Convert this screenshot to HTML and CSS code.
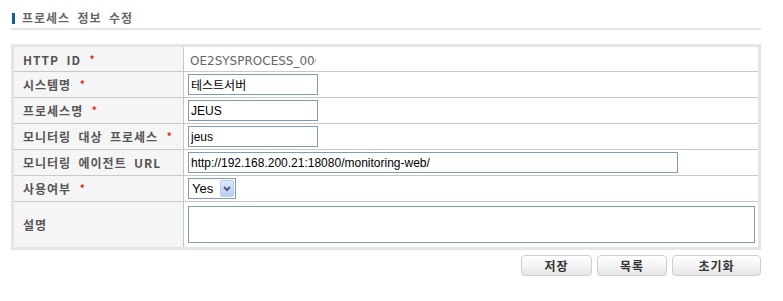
FILE: index.html
```html
<!DOCTYPE html>
<html lang="ko">
<head>
    <meta charset="UTF-8">
    <title>프로세스 정보 수정</title>
    <link rel="stylesheet" href="styles.css">
</head>
<body>
    <div class="content">
        <h3 class="section-title">프로세스 정보 수정</h3>
        <div class="form-box">
            <table class="form-table">
                <tr class="first">
                    <th>HTTP ID <span class="req">*</span></th>
                    <td><input type="text" class="readonly" value="OE2SYSPROCESS_0001" readonly></td>
                </tr>
                <tr>
                    <th>시스템명 <span class="req">*</span></th>
                    <td><input type="text" class="inp" value="테스트서버"></td>
                </tr>
                <tr>
                    <th>프로세스명 <span class="req">*</span></th>
                    <td><input type="text" class="inp" value="JEUS"></td>
                </tr>
                <tr>
                    <th>모니터링 대상 프로세스 <span class="req">*</span></th>
                    <td><input type="text" class="inp" value="jeus"></td>
                </tr>
                <tr>
                    <th>모니터링 에이전트 URL</th>
                    <td><input type="text" class="inp inp-long" value="http://192.168.200.21:18080/monitoring-web/"></td>
                </tr>
                <tr>
                    <th>사용여부 <span class="req">*</span></th>
                    <td>
                        <span class="select-wrap">
                            <select class="sel">
                                <option>Yes</option>
                                <option>No</option>
                            </select>
                            <span class="sel-arrow">
                                <svg width="8" height="6" viewBox="0 0 8 6"><path d="M1 1 L4 4 L7 1" fill="none" stroke="#4a5f86" stroke-width="2"/></svg>
                            </span>
                        </span>
                    </td>
                </tr>
                <tr class="last">
                    <th>설명</th>
                    <td><textarea class="txt"></textarea></td>
                </tr>
            </table>
        </div>
        <div class="btn-area">
            <button class="btn btn-save">저장</button>
            <button class="btn btn-list">목록</button>
            <button class="btn btn-reset">초기화</button>
        </div>
    </div>
</body>
</html>
```

FILE: styles.css
```css
body {
	margin: 0;
	font-family: "Noto Sans CJK KR", "Liberation Sans", sans-serif;
	font-size: 12px;
	color: #333;
	background: #fff;
}

.content {
	width: 750px;
	padding: 11px 0 0 11px;
}

.section-title {
	margin: 0;
	padding: 0 0 3px 11px;
	font-size: 12px;
	font-weight: bold;
	color: #666;
	line-height: 14px;
	letter-spacing: 1px;
	word-spacing: 3px;
	border-bottom: 2px solid #e5e5e5;
	position: relative;
}

.section-title:before {
	content: "";
	position: absolute;
	left: 1px;
	top: 2px;
	width: 3px;
	height: 11px;
	background: #1b5b8f;
}

.form-box {
	margin-top: 14px;
	border: 3px solid #e5e5e5;
}

.form-table {
	width: 100%;
	border-spacing: 0;
}

.form-table th,
.form-table td {
	height: 25px;
	padding: 0;
	border-bottom: 1px solid #c8c8c8;
	vertical-align: middle;
}

.form-table tr.first th,
.form-table tr.first td {
	height: 24px;
}

.form-table tr.last th,
.form-table tr.last td {
	height: 45px;
	border-bottom: none;
}

.form-table th {
	width: 160px;
	padding-left: 9px;
	text-align: left;
	font-weight: bold;
	color: #555;
	background: #f5f5f5;
	border-right: 1px solid #c8c8c8;
	white-space: nowrap;
	letter-spacing: 1px;
	word-spacing: 3px;
}

.form-table td {
	padding-left: 4px;
	background: #fff;
}

.req {
	color: #e00;
	font-weight: normal;
	margin-left: 1px;
}

.readonly {
	width: 126px;
	border: none;
	padding: 0 0 0 2px;
	font-family: "DejaVu Sans", sans-serif;
	font-size: 12px;
	color: #666;
	background: transparent;
	outline: none;
}

.inp {
	box-sizing: border-box;
	width: 130px;
	height: 21px;
	margin: 0;
	padding: 0 2px;
	border: 1px solid #7f9db9;
	font-family: "Liberation Sans", "Noto Sans CJK KR", sans-serif;
	font-size: 12px;
	color: #000;
	vertical-align: middle;
}

.inp-long {
	width: 490px;
}

.select-wrap {
	position: relative;
	display: inline-block;
	vertical-align: middle;
}

.sel {
	box-sizing: border-box;
	width: 48px;
	height: 21px;
	margin: 0;
	padding: 0 0 0 3px;
	border: 1px solid #7f9db9;
	background: #fff;
	font-family: "Liberation Sans", sans-serif;
	font-size: 13px;
	color: #000;
	-webkit-appearance: none;
	appearance: none;
	display: block;
}

.sel-arrow {
	position: absolute;
	right: 2px;
	top: 2px;
	width: 14px;
	height: 17px;
	box-sizing: border-box;
	border: 1px solid #b8cbf0;
	border-radius: 2px;
	background: linear-gradient(#dde7fd, #b9cdf7);
	display: flex;
	align-items: center;
	justify-content: center;
}

.txt {
	box-sizing: border-box;
	display: block;
	width: 567px;
	height: 37px;
	margin: 0;
	border: 1px solid #7f9db9;
	resize: none;
}

.btn-area {
	display: flex;
	justify-content: flex-end;
	gap: 5px;
	margin-top: 5px;
}

.btn {
	height: 21px;
	padding: 0;
	border: 1px solid #cfcfcf;
	border-radius: 4px;
	background: linear-gradient(#ffffff, #f4f4f4 50%, #e6e6e6);
	box-shadow: 0 1px 1px rgba(0, 0, 0, 0.08);
	font-family: "Noto Sans CJK KR", sans-serif;
	font-size: 12px;
	font-weight: bold;
	color: #333;
	letter-spacing: 1px;
	cursor: pointer;
}

.btn-save {
	width: 71px;
}

.btn-list {
	width: 70px;
}

.btn-reset {
	width: 89px;
}
```
